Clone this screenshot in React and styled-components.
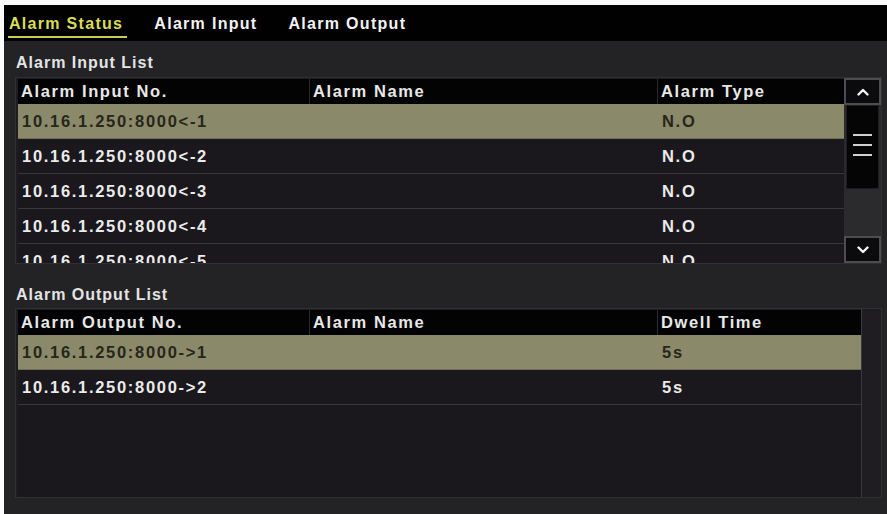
import React from 'react';
import styled, { createGlobalStyle } from 'styled-components';

const GlobalStyle = createGlobalStyle`
  html, body {
    margin: 0;
    padding: 0;
    background: #fbfbfb;
  }
  body {
    font-family: "Liberation Sans", Arial, sans-serif;
  }
`;

const Screen = styled.div`
  margin: 5px 0 0 4px;
  width: 883px;
  height: 509px;
  background: #232325;
  display: flex;
  flex-direction: column;
  overflow: hidden;
`;

const TabBar = styled.div`
  height: 36px;
  background: #010101;
  display: flex;
  align-items: stretch;
  gap: 26px;
  padding-left: 4px;
`;

const Tab = styled.div`
  position: relative;
  display: flex;
  align-items: center;
  padding: 2px 4px 0 1px;
  font-size: 16px;
  font-weight: bold;
  letter-spacing: 1.3px;
  color: ${(p) => (p.$active ? '#d9dd55' : '#f2f2f2')};

  &::after {
    content: '';
    display: ${(p) => (p.$active ? 'block' : 'none')};
    position: absolute;
    left: 0;
    right: 0;
    bottom: 3px;
    height: 2px;
    background: #c8cc52;
  }
`;

const Body = styled.div`
  flex: 1;
  display: flex;
  flex-direction: column;
  padding: 0 5px 0 11px;
`;

const SectionTitle = styled.div`
  height: 22px;
  line-height: 22px;
  margin-top: ${(p) => p.$top}px;
  padding-left: 1px;
  font-size: 16px;
  font-weight: bold;
  letter-spacing: 1px;
  color: #e4e4e4;
`;

const Frame = styled.div`
  margin-top: ${(p) => p.$top}px;
  height: ${(p) => p.$height}px;
  box-sizing: border-box;
  border: 1px solid #303032;
  padding: 1px 0 0 2px;
  display: flex;
  background: #1e1c20;
`;

const TableArea = styled.div`
  flex: 1;
  display: flex;
  flex-direction: column;
  overflow: ${(p) => (p.$clip ? 'hidden' : 'visible')};
  background: #1a181c;
`;

const HeaderRow = styled.div`
  height: 25px;
  flex: none;
  display: grid;
  grid-template-columns: ${(p) => p.$cols};
  background: #030303;
`;

const HeadCell = styled.div`
  display: flex;
  align-items: center;
  padding-left: 3px;
  font-size: 16.5px;
  font-weight: bold;
  letter-spacing: 1.6px;
  color: #e8e8e8;
  border-right: ${(p) => (p.$last ? 'none' : '1px solid #2b2b2d')};
  white-space: nowrap;
`;

const Row = styled.div`
  height: 35px;
  flex: none;
  box-sizing: border-box;
  display: grid;
  grid-template-columns: ${(p) => p.$cols};
  background: ${(p) => (p.$selected ? '#8a8969' : '#1a181c')};
  border-bottom: 1px solid ${(p) => (p.$selected ? '#6e6d55' : '#38363b')};
  margin-right: ${(p) => p.$overhang || 0}px;
`;

const Cell = styled.div`
  display: flex;
  align-items: center;
  padding-left: 4px;
  font-size: 16.5px;
  font-weight: bold;
  letter-spacing: 1.7px;
  color: ${(p) => (p.$dark ? '#26261a' : '#ebebeb')};
  white-space: nowrap;
  overflow: hidden;
`;

const Scrollbar = styled.div`
  width: 37px;
  flex: none;
  display: flex;
  flex-direction: column;
  margin-top: -1px;
  background: #2b2a2d;
`;

const ScrollButton = styled.div`
  height: 27px;
  flex: none;
  box-sizing: border-box;
  border: 2px solid #4d4d4f;
  background: #0b0b0d;
  display: flex;
  align-items: center;
  justify-content: center;
`;

const Thumb = styled.div`
  height: 84px;
  flex: none;
  box-sizing: border-box;
  margin: 0 2px;
  background: #050506;
  border: 1px solid #1e1e20;
  display: flex;
  flex-direction: column;
  align-items: center;
  justify-content: center;
  gap: 8px;
  padding-bottom: 4px;
`;

const Grip = styled.span`
  width: 19px;
  height: 2px;
  background: #d0d0d0;
`;

const Track = styled.div`
  flex: 1;
`;

const Gutter = styled.div`
  width: 19px;
  flex: none;
  border-left: 1px solid #3a393c;
  margin-top: -1px;
  background: #1f1d21;
`;

const Chevron = ({ up }) => (
  <svg width="12" height="8" viewBox="0 0 12 8">
    <polyline
      points={up ? '1.5,6.5 6,2 10.5,6.5' : '1.5,1.5 6,6 10.5,1.5'}
      fill="none"
      stroke="#f4f4f4"
      strokeWidth="2.4"
      strokeLinecap="round"
      strokeLinejoin="round"
    />
  </svg>
);

const cols = '292px 348px 1fr';

const inputs = [1, 2, 3, 4, 5].map((n) => ({
  no: `10.16.1.250:8000<-${n}`,
  type: 'N.O',
}));

const outputs = [1, 2].map((n) => ({
  no: `10.16.1.250:8000->${n}`,
  dwell: '5s',
}));

export default function App() {
  return (
    <>
      <GlobalStyle />
      <Screen>
        <TabBar>
          <Tab $active>Alarm Status</Tab>
          <Tab>Alarm Input</Tab>
          <Tab>Alarm Output</Tab>
        </TabBar>
        <Body>
          <SectionTitle $top={11}>Alarm Input List</SectionTitle>
          <Frame $top={3} $height={187}>
            <TableArea $clip>
              <HeaderRow $cols={cols}>
                <HeadCell>Alarm Input No.</HeadCell>
                <HeadCell>Alarm Name</HeadCell>
                <HeadCell $last>Alarm Type</HeadCell>
              </HeaderRow>
              {inputs.map((r, i) => (
                <Row key={r.no} $cols={cols} $selected={i === 0}>
                  <Cell $dark={i === 0}>{r.no}</Cell>
                  <Cell $dark={i === 0} />
                  <Cell $dark={i === 0}>{r.type}</Cell>
                </Row>
              ))}
            </TableArea>
            <Scrollbar>
              <ScrollButton>
                <Chevron up />
              </ScrollButton>
              <Thumb>
                <Grip />
                <Grip />
                <Grip />
              </Thumb>
              <Track />
              <ScrollButton>
                <Chevron />
              </ScrollButton>
            </Scrollbar>
          </Frame>
          <SectionTitle $top={20}>Alarm Output List</SectionTitle>
          <Frame $top={2} $height={190}>
            <TableArea>
              <HeaderRow $cols={cols}>
                <HeadCell>Alarm Output No.</HeadCell>
                <HeadCell>Alarm Name</HeadCell>
                <HeadCell $last>Dwell Time</HeadCell>
              </HeaderRow>
              {outputs.map((r, i) => (
                <Row key={r.no} $cols={cols} $selected={i === 0} $overhang={-6}>
                  <Cell $dark={i === 0}>{r.no}</Cell>
                  <Cell $dark={i === 0} />
                  <Cell $dark={i === 0}>{r.dwell}</Cell>
                </Row>
              ))}
            </TableArea>
            <Gutter />
          </Frame>
        </Body>
      </Screen>
    </>
  );
}
